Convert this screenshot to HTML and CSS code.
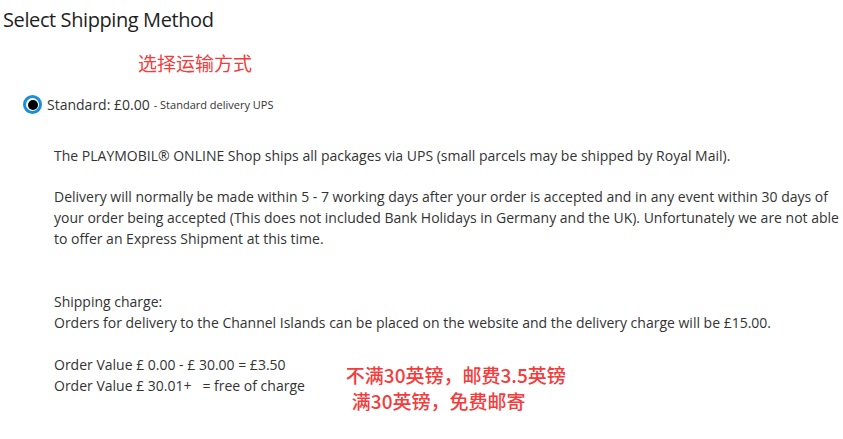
FILE: index.html
```html
<!DOCTYPE html>
<html lang="en">
<head>
<meta charset="utf-8">
<title>Select Shipping Method</title>
<link rel="stylesheet" href="styles.css">
</head>
<body>
<div class="page">
  <h1 class="title">Select Shipping Method</h1>
  <div class="note note-top">选择运输方式</div>
  <label class="option">
    <span class="radio"><span class="dot"></span></span>
    <span class="opt-main">Standard: £0.00</span>
    <span class="opt-sub">- Standard delivery UPS</span>
  </label>
  <div class="details">
    <p class="para">The PLAYMOBIL® ONLINE Shop ships all packages via UPS (small parcels may be shipped by Royal Mail).</p>
    <p class="para">Delivery will normally be made within 5 - 7 working days after your order is accepted and in any event within 30 days of your order being accepted (This does not included Bank Holidays in Germany and the UK). Unfortunately we are not able to offer an Express Shipment at this time.</p>
    <p class="para charge">Shipping charge:<br>Orders for delivery to the Channel Islands can be placed on the website and the delivery charge will be £15.00.</p>
    <div class="values">
      <p class="para">Order Value £ 0.00 - £ 30.00 = £3.50<br>Order Value £ 30.01+&nbsp;&nbsp; = free of charge</p>
      <div class="note note-bottom">
        <div>不满30英镑，邮费3.5英镑</div>
        <div class="indent">满30英镑，免费邮寄</div>
      </div>
    </div>
  </div>
</div>
</body>
</html>
```
FILE: styles.css
```css
html, body {
  margin: 0;
  padding: 0;
  background: #ffffff;
}
body {
  font-family: "Open Sans", "Noto Sans", sans-serif;
  color: #333333;
  width: 843px;
  height: 439px;
  overflow: hidden;
}
.page {
  padding: 6px 0 0 3px;
}
.title {
  margin: 0;
  font-size: 20px;
  font-weight: 400;
  line-height: 28px;
  letter-spacing: -0.4px;
  color: #1e1e1e;
}
.note {
  font-family: "Noto Sans CJK SC", "Open Sans", sans-serif;
  color: #f53b3b;
  font-size: 19px;
  line-height: 26px;
}
.note-top {
  margin: 16px 0 0 135px;
}
.option {
  display: flex;
  align-items: center;
  margin: 19px 0 0 20px;
}
.radio {
  box-sizing: border-box;
  width: 19px;
  height: 19px;
  border: 3px solid #1a8fd8;
  border-radius: 50%;
  display: flex;
  align-items: center;
  justify-content: center;
  background: #fff;
}
.dot {
  width: 10px;
  height: 10px;
  border-radius: 50%;
  background: #000;
}
.opt-main {
  font-size: 14px;
  margin-left: 5px;
}
.opt-sub {
  font-size: 11px;
  margin-left: 4px;
}
.details {
  margin: 31px 0 0 51px;
}
.para {
  margin: 0 0 20px 0;
  font-size: 14px;
  line-height: 21px;
}
.charge {
  margin-top: 42px;
  margin-bottom: 21px;
}
.values {
  display: flex;
  align-items: flex-start;
}
.note-bottom {
  font-weight: 500;
  margin: 8px 0 0 41px;
}
.indent {
  padding-left: 6px;
}
```
